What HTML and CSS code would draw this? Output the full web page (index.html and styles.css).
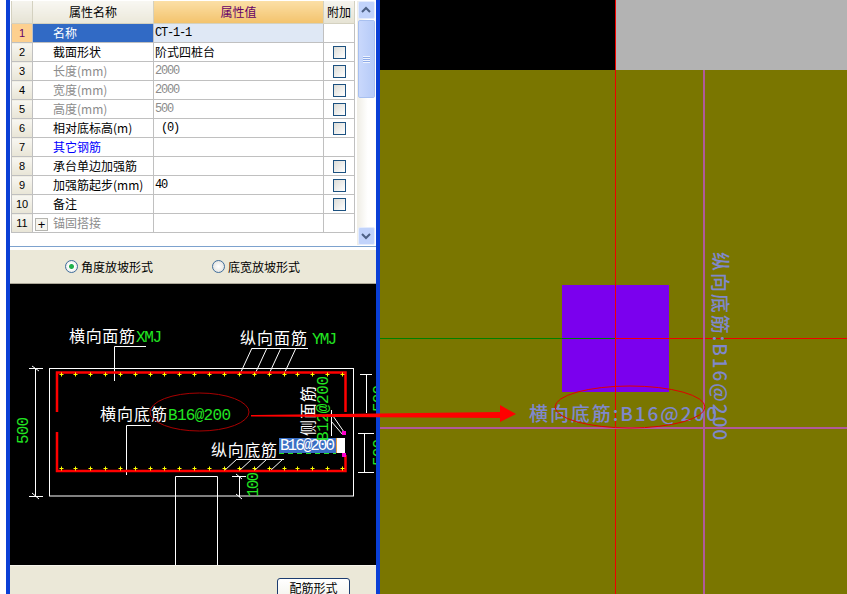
FILE: index.html
```html
<!DOCTYPE html>
<html lang="zh">
<head>
<meta charset="utf-8">
<title>属性编辑</title>
<link rel="stylesheet" href="styles.css">
</head>
<body>
<div class="page">
  <div class="edge"></div>
  <section class="panel">
    <div class="grid-area">
      <table class="props">
        <colgroup><col class="c-idx"><col class="c-name"><col class="c-val"><col class="c-add"></colgroup>
        <thead>
          <tr><th class="idx"></th><th class="name-h">属性名称</th><th class="val-h">属性值</th><th class="add-h">附加</th></tr>
        </thead>
        <tbody>
          <tr class="sel"><td class="idx">1</td><td class="name">名称</td><td class="val mono">CT-1-1</td><td></td></tr>
          <tr><td class="idx">2</td><td class="name">截面形状</td><td class="val">阶式四桩台</td><td class="chk"><span class="box"></span></td></tr>
          <tr class="dim"><td class="idx">3</td><td class="name">长度(mm)</td><td class="val mono">2000</td><td class="chk"><span class="box"></span></td></tr>
          <tr class="dim"><td class="idx">4</td><td class="name">宽度(mm)</td><td class="val mono">2000</td><td class="chk"><span class="box"></span></td></tr>
          <tr class="dim"><td class="idx">5</td><td class="name">高度(mm)</td><td class="val mono">500</td><td class="chk"><span class="box"></span></td></tr>
          <tr><td class="idx">6</td><td class="name">相对底标高(m)</td><td class="val mono">&nbsp;(0)</td><td class="chk"><span class="box"></span></td></tr>
          <tr class="link"><td class="idx">7</td><td class="name">其它钢筋</td><td class="val"></td><td></td></tr>
          <tr><td class="idx">8</td><td class="name">承台单边加强筋</td><td class="val"></td><td class="chk"><span class="box"></span></td></tr>
          <tr><td class="idx">9</td><td class="name">加强筋起步(mm)</td><td class="val mono">40</td><td class="chk"><span class="box"></span></td></tr>
          <tr><td class="idx">10</td><td class="name">备注</td><td class="val"></td><td class="chk"><span class="box"></span></td></tr>
          <tr class="dim"><td class="idx">11</td><td class="name group"><span class="plus">+</span>锚固搭接</td><td class="val"></td><td></td></tr>
        </tbody>
      </table>
      <div class="scroll">
        <div class="sbtn"><svg width="12" height="8" viewBox="0 0 12 8"><path class="chev" d="M2 6 6 2l4 4"/></svg></div>
        <div class="thumb"><span class="grip"></span></div>
        <div class="track"></div>
        <div class="sbtn"><svg width="12" height="8" viewBox="0 0 12 8"><path class="chev" d="M2 2l4 4 4-4"/></svg></div>
      </div>
    </div>
    <div class="options">
      <label class="opt"><span class="radio on"></span>角度放坡形式</label>
      <label class="opt"><span class="radio"></span>底宽放坡形式</label>
    </div>
    <svg class="cad" width="366" height="281" viewBox="10 284 366 281">
      <g class="wh">
        <rect x="49.5" y="368.5" width="304" height="127.5"/>
        <path d="M114.500 381V346.500H146M126.500 475V425.500H151M252 348.500H308M252 348 240 374M267 348 255 374M281 348 269 374M296 348 284 374M237 459.500H284M237 459 224 471M252 459 239 471M267 459 254 471M283 459 270 471"/>
        <path d="M35.500 368V496M29 368.500H43M29 496.500H43M32 366l7 5M32 493l7 6"/>
        <path d="M366.500 374V413M360 374.500H372M364.500 433V472M358 433.500H374M358 472.500H374"/>
        <path d="M239.500 476V497M232 476.500H246M236 474l6 5M236 494l6 5"/>
        <path d="M175.500 565V476.500H217.500V565"/>
        <path d="M331 413 344 432M331 421 343 435M331.500 410V436"/>
      </g>
      <g class="rebar">
        <path d="M57 412V372.500H345.500V412M57 432V471H345.500V455"/>
      </g>
      <g class="yel" transform="translate(.5 .5)">
        <path d="M61 372v4M59 374h4M75 372v4M73 374h4M90 372v4M88 374h4M105 372v4M103 374h4M120 372v4M118 374h4M135 372v4M133 374h4M150 372v4M148 374h4M164 372v4M162 374h4M179 372v4M177 374h4M194 372v4M192 374h4M209 372v4M207 374h4M224 372v4M222 374h4M239 372v4M237 374h4M254 372v4M252 374h4M269 372v4M267 374h4M284 372v4M282 374h4M297 372v4M295 374h4M312 372v4M310 374h4M327 372v4M325 374h4M342 372v4M340 374h4"/>
        <path d="M61 466v4M59 468h4M75 466v4M73 468h4M90 466v4M88 468h4M105 466v4M103 468h4M120 466v4M118 468h4M135 466v4M133 468h4M150 466v4M148 468h4M164 466v4M162 468h4M179 466v4M177 468h4M194 466v4M192 468h4M209 466v4M207 468h4M224 466v4M222 468h4M239 466v4M237 468h4M254 466v4M252 468h4M269 466v4M267 468h4M284 466v4M282 468h4M297 466v4M295 468h4M312 466v4M310 468h4M327 466v4M325 468h4M342 466v4M340 468h4"/>
      </g>
      <rect class="mag" x="342" y="431" width="4" height="4"/>
      <rect class="mag" x="342" y="453" width="4" height="4"/>
      <text class="t-w" x="69" y="342" textLength="66">横向面筋</text>
      <text class="t-g t-m" x="136" y="342" textLength="26">XMJ</text>
      <text class="t-w" x="240" y="344" textLength="67">纵向面筋</text>
      <text class="t-g t-m" x="312" y="344" textLength="25">YMJ</text>
      <text class="t-w" x="100" y="420" textLength="67">横向底筋</text>
      <text class="t-g t-m" x="168" y="420" textLength="63">B16@200</text>
      <text class="t-w" x="211" y="456" textLength="66">纵向底筋</text>
      <path class="dash" d="M279 453.500H336"/>
      <rect class="hl" x="279" y="438" width="57" height="15"/>
      <rect class="car-o" x="336" y="438" width="1" height="15"/>
      <rect class="car" x="337" y="438" width="8" height="15"/>
      <text class="t-hl t-m" x="280" y="450" textLength="55">B16@200</text>
      <text class="t-w" transform="translate(314 436) rotate(-90)" textLength="50">侧面筋</text>
      <text class="t-g t-m" transform="translate(328 441) rotate(-90)" textLength="65">B12@200</text>
      <text class="t-g t-m" transform="translate(28 444) rotate(-90)" textLength="27">500</text>
      <text class="t-g t-m" transform="translate(258 497) rotate(-90)" textLength="25">100</text>
      <text class="t-g t-m" transform="translate(384 412) rotate(-90)" textLength="27">500</text>
      <text class="t-g t-m" transform="translate(384 466) rotate(-90)" textLength="27">500</text>
      <ellipse class="oval" cx="199.500" cy="412" rx="49.500" ry="19"/>
    </svg>
    <div class="foot"><button class="btn" type="button">配筋形式</button></div>
  </section>
  <main class="canvas">
    <svg width="467" height="594" viewBox="380 0 467 594">
      <rect class="olive" x="380" y="70" width="467" height="524"/>
      <rect class="black" x="380" y="0" width="236" height="70"/>
      <rect class="gray" x="616" y="0" width="231" height="70"/>
      <rect class="violet" x="562" y="285" width="107" height="107"/>
      <path class="ln-g" d="M380 338.500H615"/>
      <path class="ln-r" d="M615 338.500H847M615.500 0V594"/>
      <path class="ln-p" d="M380 428H847M704 70V594"/>
      <text class="t-b" x="529" y="421" textLength="188">横向底筋:B16@200</text>
      <text class="t-b" transform="translate(713 252) rotate(90)" textLength="188">纵向底筋:B16@200</text>
      <ellipse class="oval2" cx="630" cy="407" rx="75" ry="21"/>
    </svg>
  </main>
  <svg class="arrow" width="847" height="594" viewBox="0 0 847 594">
    <path class="arrow-f" d="M251 415 500 412V405L516 414 500 422V418L251 416.500Z"/>
  </svg>
</div>
</body>
</html>
```
FILE: styles.css
```css
html, body { margin: 0; padding: 0; height: 594px; overflow: hidden; background: #fff; }
body { font-family: "Noto Sans CJK SC", "Liberation Sans", sans-serif; font-size: 12px; color: #000; }
.page { position: relative; display: flex; width: 847px; height: 594px; overflow: hidden; }
.edge { width: 6px; background: #fff; flex: none; }
.panel { width: 366px; flex: none; display: flex; flex-direction: column; border-left: 4px solid #0a3fd6; border-right: 4px solid #0a3fd6; background: #fff; }
.grid-area { height: 247px; flex: none; display: flex; padding: 1px 1px 0; box-sizing: border-box; border-bottom: 1px solid #7da2ce; }

.props { border-collapse: collapse; table-layout: fixed; width: 343px; height: 231px; align-self: flex-start; }
.c-idx { width: 21px; } .c-name { width: 121px; } .c-val { width: 170px; } .c-add { width: 31px; }
.props th { height: 22px; padding: 0; font-weight: 400; font-size: 12px; line-height: 14px; background: linear-gradient(#f5f4ee, #e6e3d4); border: 1px solid #d4d1c0; border-top: 0; }
.props th.val-h { background: linear-gradient(#fbdfa6, #f3c36d); color: #660066; }
.props th.name-h { background: linear-gradient(#f8f7f2, #ebe8da); }
.props td { height: 18px; padding: 0; border: 1px solid #c0c0c0; font-size: 12px; line-height: 14px; white-space: nowrap; overflow: hidden; }
.props td.idx { text-align: center; background: linear-gradient(#f8f7f2, #e8e5d6); font-size: 11px; font-family: "Liberation Sans", sans-serif; }
.props td.name { padding-left: 20px; }
.props td.group { padding-left: 2px; }
.props td.val { padding-left: 1px; }
.props td.mono { font-family: "Liberation Mono", monospace; font-size: 12px; letter-spacing: -1.2px; }
.sel td.idx { background: #fdd08f; color: #660066; }
.sel td.name { background: #316ac5; color: #fff; }
.sel td.val { background: #dfe8f5; }
.dim td.name, .dim td.val { color: #8c8c8c; }
.link td.name { color: #0000ff; }
.chk { text-align: center; }
.box { display: block; width: 11px; height: 11px; margin: 0 auto; border: 1px solid #1c5180; background: linear-gradient(135deg, #dcdcd7, #fff); }
.plus { display: inline-block; width: 11px; height: 11px; line-height: 11px; text-align: center; border: 1px solid #b5b5b0; background: #f6f5ef; color: #000; font-size: 13px; margin-right: 5px; vertical-align: -1px; font-family: "Liberation Sans", sans-serif; }

.scroll { width: 20px; height: 244px; margin-left: 2px; display: flex; flex-direction: column; align-items: center; gap: 1px; background: linear-gradient(90deg, #efede5, #fff 60%); }
.sbtn { width: 17px; height: 18px; flex: none; box-sizing: border-box; display: flex; align-items: center; justify-content: center; background: #c1d3fb; border: 1px solid #e4ecfd; border-radius: 2px; }
.chev { fill: none; stroke: #4d6185; stroke-width: 2; }
.thumb { width: 17px; height: 78px; flex: none; box-sizing: border-box; display: flex; align-items: center; justify-content: center; background: linear-gradient(90deg, #c9d8fc, #b6cbf8); border: 1px solid #e4ecfd; outline: 1px solid #a8c0f0; outline-offset: -1px; border-radius: 2px; }
.grip { width: 7px; height: 7px; background: repeating-linear-gradient(#eef3fe 0 1px, #8fabe8 1px 2px); }
.track { flex: 1; }

.options { height: 34px; flex: none; margin-top: 3px; box-sizing: border-box; padding: 0 0 1px 55px; display: flex; align-items: center; gap: 59px; background: #ebe8d8; border-bottom: 1px solid #aca899; }
.opt { display: flex; align-items: center; gap: 3px; font-size: 12px; }
.radio { width: 11px; height: 11px; border-radius: 50%; border: 1px solid #3f6d9c; background: radial-gradient(#fff, #dcdcd7); display: block; box-sizing: content-box; }
.radio.on { background: radial-gradient(#22b14c 0 2px, #fff 3px, #dcdcd7); }

.cad { display: block; background: #000; flex: none; }
.cad .wh path, .cad .wh rect { fill: none; stroke: #fff; stroke-width: 1; }
.rebar path { fill: none; stroke: #ff0000; stroke-width: 2.5; }
.yel path { fill: none; stroke: #ffff00; stroke-width: 1; }
.mag { fill: #ff00cc; }
.t-w { fill: #fff; font-size: 16px; }
.t-g { fill: #22e622; }
.t-m { font-family: "Liberation Mono", monospace; font-size: 16px; }
.t-hl { fill: #fff; }
.hl { fill: #3a6fc4; }
.car { fill: #fff; }
.car-o { fill: #e8a040; }
.dash { stroke: #22e622; stroke-width: 1; stroke-dasharray: 5 4; }
.oval { fill: none; stroke: #a80000; stroke-width: 1; }

.foot { height: 29px; flex: none; box-sizing: border-box; overflow: hidden; display: flex; justify-content: flex-end; align-items: flex-start; padding: 12px 26px 0 0; background: #ebe8d8; border-top: 1px solid #f5f3ea; }
.btn { width: 73px; height: 28px; padding: 0 0 11px; font: 12px "Noto Sans CJK SC", sans-serif; color: #000; background: linear-gradient(#fff, #f0efe6); border: 1px solid #1c3c70; border-radius: 3px; flex: none; }

.canvas { flex: 1; background: #7a7600; }
.canvas svg { display: block; }
.olive { fill: #7a7600; }
.black { fill: #000; }
.gray { fill: #b3b3b3; }
.violet { fill: #7b00ee; }
.ln-g { stroke: #008000; stroke-width: 1; fill: none; }
.ln-r { stroke: #f00000; stroke-width: 1; fill: none; }
.ln-p { stroke: #b05a9a; stroke-width: 2; fill: none; }
.t-b { fill: #7f88cc; font-size: 19px; font-weight: 500; font-family: "Noto Sans CJK SC", "DejaVu Sans", sans-serif; }
.oval2 { fill: none; stroke: #e00000; stroke-width: 1; }

.arrow { position: absolute; left: 0; top: 0; pointer-events: none; }
.arrow-f { fill: #ff0000; }
```
